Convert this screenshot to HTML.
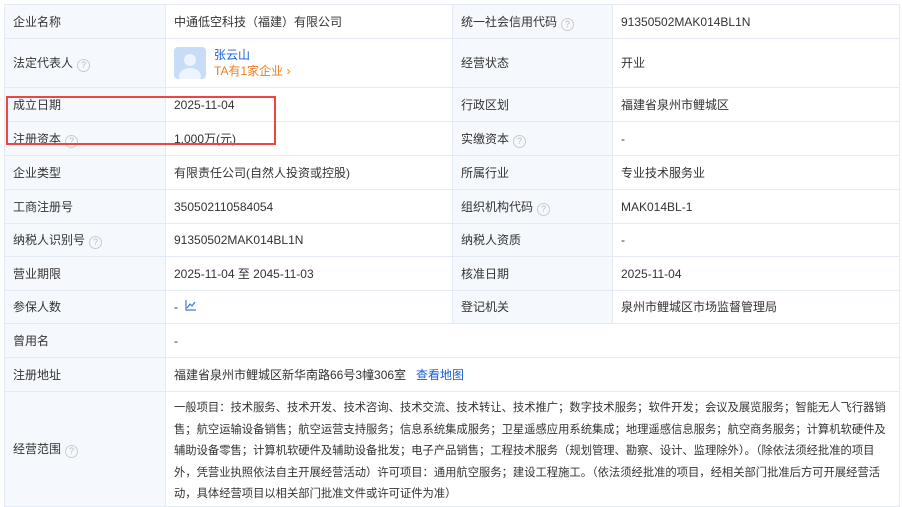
<!DOCTYPE html>
<html><head><meta charset="utf-8"><style>
body{margin:0;background:#fff;width:902px;height:499px;overflow:hidden;font-family:"Liberation Sans","Noto Sans CJK SC",sans-serif;font-size:12px;color:#333}
table{position:absolute;left:4px;top:4px;border-collapse:collapse;table-layout:fixed;width:895px}
td{border:1px solid #e4ebf5;padding:0 8px;vertical-align:middle;line-height:18px}
td.l{background:#f5f8fd;color:#333}
.q{display:inline-block;width:11px;height:11px;border:1px solid #ccc;border-radius:50%;font-size:9px;line-height:11px;text-align:center;color:#bbb;margin-left:4px;vertical-align:-1px}
a{color:#1a5fd8;text-decoration:none}
.red{position:absolute;left:6px;top:96px;width:270px;height:49px;border:2px solid #ee4444;box-sizing:border-box}
</style></head><body>
<table>
<colgroup><col style="width:161px"><col style="width:287px"><col style="width:160px"><col style="width:287px"></colgroup>
<tr style="height:34px"><td class="l">企业名称</td><td>中通低空科技（福建）有限公司</td><td class="l">统一社会信用代码<span class="q">?</span></td><td>91350502MAK014BL1N</td></tr>
<tr style="height:49px"><td class="l">法定代表人<span class="q">?</span></td><td><div style="display:flex;align-items:center"><div style="width:32px;height:32px;background:#c9dcf7;border-radius:4px;position:relative;overflow:hidden;margin-right:8px"><div style="position:absolute;left:10px;top:7px;width:12px;height:12px;border-radius:50%;background:#eef4fd"></div><div style="position:absolute;left:5px;top:21px;width:22px;height:16px;border-radius:50%;background:#eef4fd"></div></div><div style="line-height:16px"><a>张云山</a><br><span style="color:#f07d1c">TA有1家企业 ›</span></div></div></td><td class="l">经营状态</td><td>开业</td></tr>
<tr style="height:34px"><td class="l">成立日期</td><td>2025-11-04</td><td class="l">行政区划</td><td>福建省泉州市鲤城区</td></tr>
<tr style="height:34px"><td class="l">注册资本<span class="q">?</span></td><td>1,000万(元)</td><td class="l">实缴资本<span class="q">?</span></td><td>-</td></tr>
<tr style="height:34px"><td class="l">企业类型</td><td>有限责任公司(自然人投资或控股)</td><td class="l">所属行业</td><td>专业技术服务业</td></tr>
<tr style="height:34px"><td class="l">工商注册号</td><td>350502110584054</td><td class="l">组织机构代码<span class="q">?</span></td><td>MAK014BL-1</td></tr>
<tr style="height:33px"><td class="l">纳税人识别号<span class="q">?</span></td><td>91350502MAK014BL1N</td><td class="l">纳税人资质</td><td>-</td></tr>
<tr style="height:34px"><td class="l">营业期限</td><td>2025-11-04 至 2045-11-03</td><td class="l">核准日期</td><td>2025-11-04</td></tr>
<tr style="height:33px"><td class="l">参保人数</td><td>- &nbsp;<svg width="11" height="11" viewBox="0 0 11 11" style="vertical-align:0"><path d="M1 0V10H11M2 8L5 4L7 6L10 2" stroke="#3d7be0" fill="none" stroke-width="1.2"/></svg></td><td class="l">登记机关</td><td>泉州市鲤城区市场监督管理局</td></tr>
<tr style="height:34px"><td class="l">曾用名</td><td colspan="3">-</td></tr>
<tr style="height:34px"><td class="l">注册地址</td><td colspan="3">福建省泉州市鲤城区新华南路66号3幢306室 &nbsp;&nbsp;<a>查看地图</a></td></tr>
<tr style="height:110px"><td class="l">经营范围<span class="q">?</span></td><td colspan="3" style="line-height:21.6px;padding:6px 10px 0 8px;font-size:11.3px;vertical-align:top">一般项目：技术服务、技术开发、技术咨询、技术交流、技术转让、技术推广；数字技术服务；软件开发；会议及展览服务；智能无人飞行器销售；航空运输设备销售；航空运营支持服务；信息系统集成服务；卫星遥感应用系统集成；地理遥感信息服务；航空商务服务；计算机软硬件及辅助设备零售；计算机软硬件及辅助设备批发；电子产品销售；工程技术服务（规划管理、勘察、设计、监理除外）。（除依法须经批准的项目外，凭营业执照依法自主开展经营活动）许可项目：通用航空服务；建设工程施工。（依法须经批准的项目，经相关部门批准后方可开展经营活动，具体经营项目以相关部门批准文件或许可证件为准）</td></tr>
</table>
<div class="red"></div>
</body></html>
